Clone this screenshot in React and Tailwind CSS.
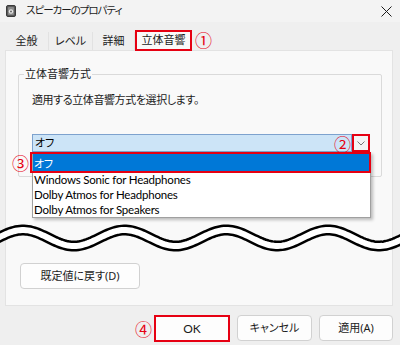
import React from 'react';

const FONT = "font-['Noto_Sans','Noto_Sans_CJK_JP',sans-serif] [font-feature-settings:'palt']";
const LATIN = "font-['Lato','Noto_Sans_CJK_JP',sans-serif]";

// wave across the cut, computed once
const WAVE = (() => {
    const pts = [];
    for (let x = -12; x <= 412; x += 2) {
        const y = 20 - 8 * Math.cos((2 * Math.PI * (x - 23)) / 101.7);
        pts.push(`${x},${y.toFixed(2)}`);
    }
    return 'M' + pts.join(' L');
})();

function Mark({ n, className }) {
    return (
        <span className={`absolute text-[#e60012] text-[17px] leading-none font-['Noto_Sans_CJK_JP',sans-serif] ${className}`}>
            {n}
        </span>
    );
}

function Tab({ label, width }) {
    return (
        <div className={`h-[18px] ${width} flex items-center justify-center border-r border-[#e2e2e2] text-[11px] text-[#1b1b1b]`}>
            {label}
        </div>
    );
}

function Button({ label, className = '' }) {
    return (
        <div className={`h-[26px] flex items-center justify-center rounded-[4px] border border-[#d1d1d1] bg-[#fdfdfd] text-[11px] text-[#1b1b1b] ${className}`}>
            {label}
        </div>
    );
}

export default function App() {
    return (
        <div className={`relative w-[400px] h-[345px] overflow-hidden bg-[#efefef] ${FONT}`}>
            {/* title bar */}
            <div className="h-[22px] bg-[#f3f3f3] flex items-center pl-[6px] pr-[8px]">
                <svg width="10" height="12" viewBox="0 0 10 12">
                    <rect x="0.5" y="0.5" width="9" height="11" rx="1.5" fill="#5a5a5a" stroke="#3a3a3a" />
                    <rect x="2" y="2" width="6" height="8" rx="1" fill="#8a8a8a" />
                    <circle cx="5" cy="6.5" r="2.2" fill="#e8e8e8" />
                    <circle cx="5" cy="6.5" r="0.9" fill="#5a5a5a" />
                </svg>
                <span className="ml-[10px] text-[10.5px] tracking-[-1px] text-[#1b1b1b]">スピーカーのプロパティ</span>
                <svg className="ml-auto" width="11" height="11" viewBox="0 0 11 11">
                    <path d="M0.5 0.5 L10.5 10.5 M10.5 0.5 L0.5 10.5" stroke="#1b1b1b" strokeWidth="1" />
                </svg>
            </div>

            {/* tabs */}
            <div className="relative h-[28px] flex items-end pl-[5px]">
                <Tab label="全般" width="w-[44px]" />
                <Tab label="レベル" width="w-[44px]" />
                <Tab label="詳細" width="w-[42px]" />
                <div className="relative z-10 -mb-[1px] w-[57px] h-[21px] flex items-center justify-center border-2 border-[#e60012] bg-[#f9f9f9] text-[11px] text-[#1b1b1b]">
                    立体音響
                </div>
                <Mark n="①" className="left-[195px] top-[9px]" />
            </div>

            {/* tab page */}
            <div className="mx-[5px] w-[388px] h-[256px] border border-[#e3e3e3] bg-[#f9f9f9] pt-[23px] pl-[12px]">
                <div className="relative w-[364px] h-[103px] border border-[#dadada] rounded-[2px] pl-[13px] pt-[17px]">
                    <span className="absolute -top-[9px] left-[5px] px-[1px] bg-[#f9f9f9] text-[11px] leading-[16px] text-[#1b1b1b]">
                        立体音響方式
                    </span>
                    <div className="text-[11px] leading-[16px] tracking-[-0.4px] text-[#1b1b1b]">適用する立体音響方式を選択します。</div>
                    <div className="mt-[26px] w-[338px] h-[18px] flex">
                        <div className="flex-1 flex items-center border border-[#7da2ce] bg-[#cce4f7] pl-[2px] text-[11px] text-[#000]">
                            オフ
                        </div>
                        <div className="w-[18px] flex items-center justify-center border-2 border-[#e60012] bg-[#f4f4f4]">
                            <svg width="8" height="5" viewBox="0 0 8 5">
                                <path d="M0.5 0.5 L4 4 L7.5 0.5" fill="none" stroke="#777" strokeWidth="1" />
                            </svg>
                        </div>
                    </div>
                </div>

                <Button label="既定値に戻す(D)" className="mt-[86px] ml-[2px] w-[120px] h-[25px]" />
            </div>

            {/* buttons */}
            <div className="flex justify-end gap-[7px] pr-[7px] pt-[9px]">
                <div className={`relative w-[76px] h-[27px] border-2 border-[#e60012] bg-[#fdfdfd] flex items-center justify-center text-[12px] text-[#1b1b1b] ${LATIN}`}>
                    OK
                </div>
                <Button label="キャンセル" className="w-[75px]" />
                <Button label="適用(A)" className="w-[74px]" />
            </div>
            <Mark n="④" className="left-[135px] top-[320px]" />
            <Mark n="②" className="left-[334px] top-[135px]" />
            <Mark n="③" className="left-[12px] top-[154px]" />

            {/* open list */}
            <div className={`absolute left-[32px] top-[152px] w-[339px] h-[66px] border border-[#a0a0a0] bg-white shadow-[2px_2px_3px_rgba(0,0,0,0.25)] text-[11.5px] tracking-[-0.2px] leading-[15px] text-[#000] ${LATIN}`}>
                <div className={`h-[18px] mt-[1px] flex items-center pl-[1px] bg-[#0078d7] text-white text-[11px] ${FONT}`}>オフ</div>
                <div className="h-[15px] flex items-center pl-[1px]">Windows Sonic for Headphones</div>
                <div className="h-[15px] flex items-center pl-[1px]">Dolby Atmos for Headphones</div>
                <div className="h-[15px] flex items-center pl-[1px]">Dolby Atmos for Speakers</div>
            </div>
            <div className="absolute left-[30px] top-[152px] w-[341px] h-[21px] border-2 border-[#e60012]" />

            {/* cut mark */}
            <svg className="absolute left-0 top-[218px]" width="400" height="40" viewBox="0 0 400 40">
                <path d={WAVE} fill="none" stroke="#000" strokeWidth="11" />
                <path d={WAVE} fill="none" stroke="#fff" strokeWidth="6" />
            </svg>
        </div>
    );
}
